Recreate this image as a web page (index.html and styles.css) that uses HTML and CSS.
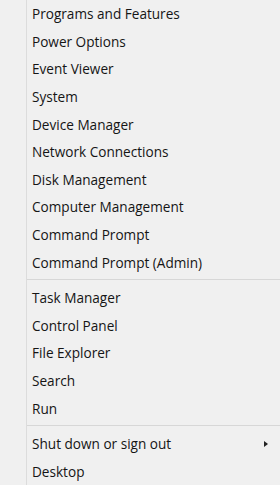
FILE: index.html
```html
<!DOCTYPE html>
<html lang="en">
<head>
    <meta charset="UTF-8">
    <title>Quick Link Menu</title>
    <link rel="stylesheet" href="styles.css">
</head>
<body>
    <div class="menu">
        <div class="item">Programs and Features</div>
        <div class="item">Power Options</div>
        <div class="item">Event Viewer</div>
        <div class="item">System</div>
        <div class="item">Device Manager</div>
        <div class="item">Network Connections</div>
        <div class="item">Disk Management</div>
        <div class="item">Computer Management</div>
        <div class="item">Command Prompt</div>
        <div class="item">Command Prompt (Admin)</div>
        <div class="sep"></div>
        <div class="item">Task Manager</div>
        <div class="item">Control Panel</div>
        <div class="item">File Explorer</div>
        <div class="item">Search</div>
        <div class="item">Run</div>
        <div class="sep"></div>
        <div class="item sub">Shut down or sign out <span class="arrow"></span></div>
        <div class="item">Desktop</div>
    </div>
</body>
</html>
```
FILE: styles.css
```css
* {
    margin: 0;
    padding: 0;
    box-sizing: border-box;
}

body {
    background-color: #f0f0f0;
    font-family: 'Open Sans', 'Noto Sans', sans-serif;
    font-size: 13.6px;
    color: #151515;
    overflow: hidden;
}

.menu {
    height: 485px;
    margin-left: 26px;
    border-left: 1px solid #dcdcdc;
}

.item {
    height: 27.6px;
    display: flex;
    align-items: center;
    padding-left: 5px;
    padding-right: 12px;
    white-space: nowrap;
}

.sub {
    justify-content: space-between;
}

.arrow {
    width: 0;
    height: 0;
    border-top: 3.5px solid transparent;
    border-bottom: 3.5px solid transparent;
    border-left: 4px solid #222;
}

.sep {
    height: 8px;
    display: flex;
    align-items: center;
}

.sep::after {
    content: "";
    display: block;
    width: 100%;
    height: 1px;
    background-color: #d7d7d7;
}
```
